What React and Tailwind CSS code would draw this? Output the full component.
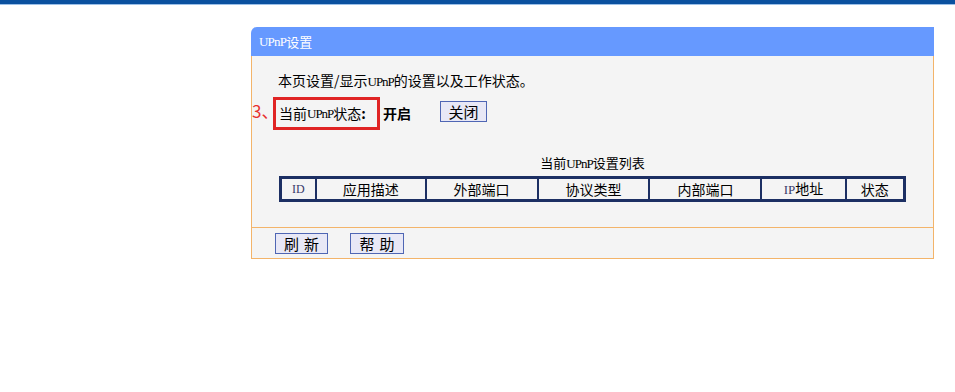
import React from 'react';

const cjk = { fontFamily: '"Noto Sans CJK SC", "Liberation Sans", sans-serif' };

function Latin({ children }) {
  return (
    <span className="text-[13px] tracking-[-1px]" style={{ fontFamily: '"Liberation Serif", serif' }}>
      {children}
    </span>
  );
}

function Btn({ children, className = '' }) {
  return (
    <button className={`h-[21px] bg-[#e8e8f6] border border-[#4f66b4] text-[15px] leading-[19px] text-black flex items-center justify-center ${className}`}>
      {children}
    </button>
  );
}

const columns = [
  { label: 'ID', w: 'w-[33px]', latin: true },
  { label: '应用描述', w: 'w-[111px]' },
  { label: '外部端口', w: 'w-[113px]' },
  { label: '协议类型', w: 'w-[113px]' },
  { label: '内部端口', w: 'w-[113px]' },
  { label: 'IP地址', w: 'w-[85px]' },
  { label: '状态', w: 'w-[59px]' },
];

export default function App() {
  return (
    <div className="w-[955px] h-[392px] bg-white overflow-hidden" style={cjk}>
      <div className="h-[4px] bg-[#0b519f]" />
      <div className="h-px bg-[#9cc0e8]" />

      <div className="pl-[251px] pt-[22px]">
        <div className="w-[683px]">
          {/* header */}
          <div className="h-[29px] bg-[#6699ff] rounded-tl-[6px] flex items-center pl-[8px] text-white text-[13px]">
            <span style={{ fontFamily: '"Liberation Serif", serif' }} className="text-[13px] tracking-[-0.8px]">UPnP</span>
            <span>设置</span>
          </div>

          {/* body */}
          <div className="h-[171px] bg-[#f4f4f4] border-x border-[#f3b46a] flex flex-col">
            <div className="mt-[14px] pl-[26px] h-[20px] leading-[20px] text-[14px] text-black">
              本页设置/显示<Latin>UPnP</Latin>的设置以及工作状态。
            </div>

            <div className="mt-[7px] flex items-center">
              <span className="w-[21px] text-[17px] leading-[20px] text-[#e8302a] -mt-[6px]">3、</span>
              <div className="w-[107px] h-[33px] border-[3px] border-[#e02424] flex items-center pl-[3px] text-[14px] text-black">
                当前<Latin>UPnP</Latin>状态<span className="font-bold">:</span>
              </div>
              <span className="ml-[3px] -mt-[1px] text-[14px] font-bold text-black">开启</span>
              <Btn className="ml-[29px] -mt-[4px] w-[47px]">关闭</Btn>
            </div>

            <div className="mt-[25px] h-[16px] leading-[16px] text-[13px] text-black text-center">
              当前<Latin>UPnP</Latin>设置列表
            </div>

            <div className="mt-[5px] ml-[27px] w-[627px] h-[26px] border-[3px] border-[#1c2f63] flex">
              {columns.map((c, i) => (
                <div
                  key={c.label}
                  className={`${c.w} ${i === 0 ? '' : 'border-l-2 border-[#1c2f63]'} flex items-center justify-center text-[14px] text-black`}
                >
                  {c.latin ? (
                    <span className="text-[12px] text-[#3a3a6a]" style={{ fontFamily: '"Liberation Serif", serif' }}>ID</span>
                  ) : c.label === 'IP地址' ? (
                    <span><span className="text-[13px] text-[#3a3a6a]" style={{ fontFamily: '"Liberation Serif", serif' }}>IP</span>地址</span>
                  ) : (
                    c.label
                  )}
                </div>
              ))}
            </div>
          </div>

          {/* footer */}
          <div className="h-[32px] bg-[#f4f4f4] border border-[#f3b46a] flex items-center pl-[23px] gap-[22px]">
            <Btn className="w-[53px] tracking-[5px] pl-[5px]">刷新</Btn>
            <Btn className="w-[54px] tracking-[5px] pl-[5px]">帮助</Btn>
          </div>
        </div>
      </div>
    </div>
  );
}
